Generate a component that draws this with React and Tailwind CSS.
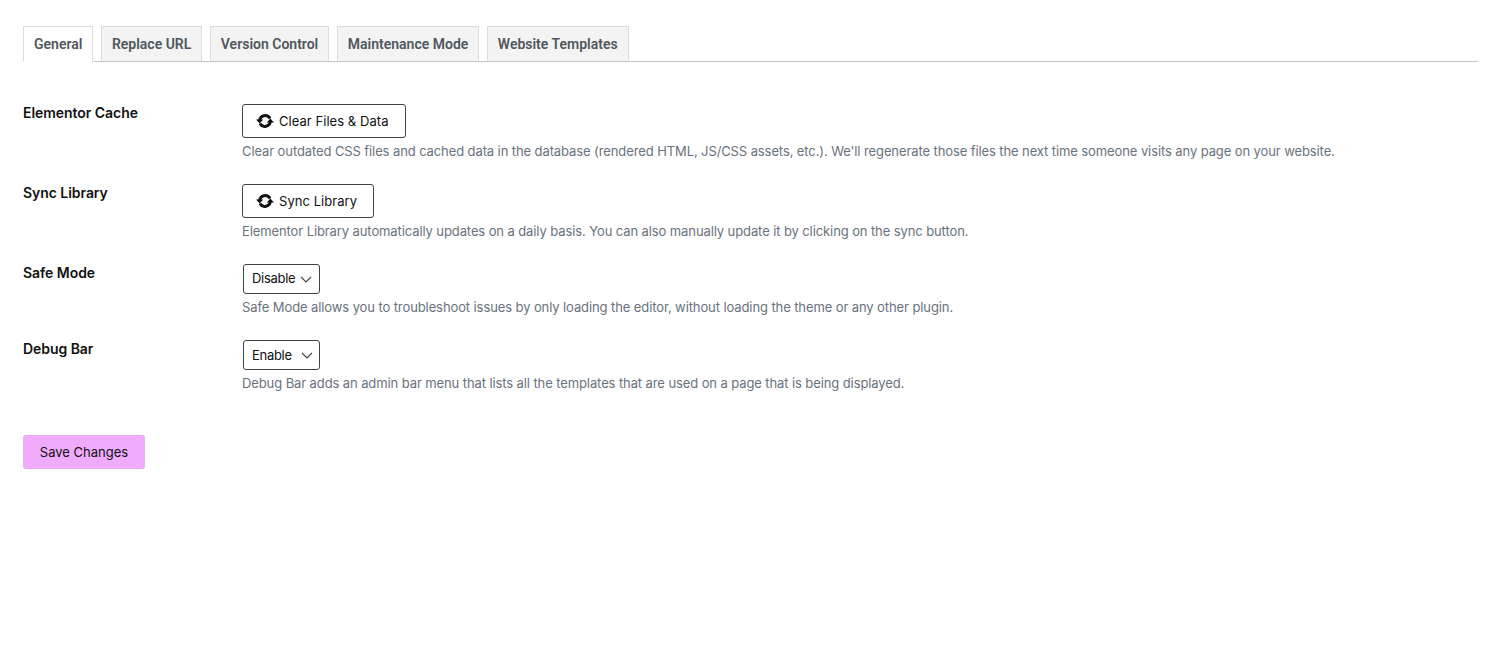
const tabs = ['General', 'Replace URL', 'Version Control', 'Maintenance Mode', 'Website Templates'];

function SyncIcon() {
  return (
    <svg width="18" height="16" viewBox="0 0 18 16" className="shrink-0">
      <path d="M3.6 7.8A5.6 5.6 0 0 1 14 5.4" fill="none" stroke="#111" strokeWidth="3" />
      <path d="M14.4 8.2A5.6 5.6 0 0 1 4 10.6" fill="none" stroke="#111" strokeWidth="3" />
      <path d="M0 6.4H7.2L3.6 10.6Z" fill="#111" />
      <path d="M18 9.6H10.8L14.4 5.4Z" fill="#111" />
    </svg>
  );
}

function Chevron() {
  return (
    <svg width="12" height="7" viewBox="0 0 12 7" className="shrink-0">
      <path d="M1 1l5 5 5-5" fill="none" stroke="#3c434a" strokeWidth="1.1" />
    </svg>
  );
}

function ActionButton({ label, width }) {
  return (
    <button className={`flex h-[34px] items-center gap-[5px] rounded-[3px] border border-[#3c434a] bg-white pl-[13px] text-[13px] tracking-[0.05px] text-[#111] ${width}`}>
      <SyncIcon />
      <span className="relative top-px">{label}</span>
    </button>
  );
}

function SelectBox({ value, gap, nudge }) {
  return (
    <div className={`ml-px flex h-[30px] w-[77px] items-center rounded-[3px] border border-[#3c434a] bg-white pl-2 text-[13px] tracking-[-0.3px] text-[#111] ${gap}`}>
      <span className={nudge}>{value}</span>
      <Chevron />
    </div>
  );
}

function Row({ label, desc, children }) {
  return (
    <div className="mb-[23px] flex">
      <div className="w-[219px] shrink-0 text-[14px] leading-[18px] font-semibold tracking-[-0.05px] text-[#111]">{label}</div>
      <div>
        {children}
        <p className="mt-[3px] text-[13px] leading-5 tracking-[-0.1px] text-[#69727d]">{desc}</p>
      </div>
    </div>
  );
}

export default function App() {
  return (
    <div className="min-h-[650px] bg-white pt-[26px] pr-[7px] pl-[23px] font-['Inter',sans-serif]">
      {/* Tabs */}
      <div className="flex gap-[7.5px] border-b border-[#c3c4c7]">
        {tabs.map((t, i) => (
          <div
            key={t}
            className={`-mb-px flex h-[36px] items-center border border-[#dcdcde] px-[10px] font-['Roboto',sans-serif] text-[14px] font-semibold text-[#50575e] ${
              i === 0 ? 'border-b-white bg-white' : 'border-b-[#c3c4c7] bg-[#f3f3f3]'
            }`}
          >
            {t}
          </div>
        ))}
      </div>

      <div className="mt-[42px]">
        <Row
          label="Elementor Cache"
          desc="Clear outdated CSS files and cached data in the database (rendered HTML, JS/CSS assets, etc.). We'll regenerate those files the next time someone visits any page on your website."
        >
          <ActionButton label="Clear Files & Data" width="w-[164px]" />
        </Row>
        <Row
          label="Sync Library"
          desc="Elementor Library automatically updates on a daily basis. You can also manually update it by clicking on the sync button."
        >
          <ActionButton label="Sync Library" width="w-[132px]" />
        </Row>
        <Row
          label="Safe Mode"
          desc="Safe Mode allows you to troubleshoot issues by only loading the editor, without loading the theme or any other plugin."
        >
          <SelectBox value="Disable" gap="gap-[5px]" />
        </Row>
        <Row
          label="Debug Bar"
          desc="Debug Bar adds an admin bar menu that lists all the templates that are used on a page that is being displayed."
        >
          <SelectBox value="Enable" gap="gap-[9px]" nudge="relative top-px" />
        </Row>
      </div>

      <button className="mt-[19px] h-[34px] w-[122px] rounded-[3px] bg-[#f0abfc] pt-[2px] text-[13px] text-[#111]">
        Save Changes
      </button>
    </div>
  );
}
